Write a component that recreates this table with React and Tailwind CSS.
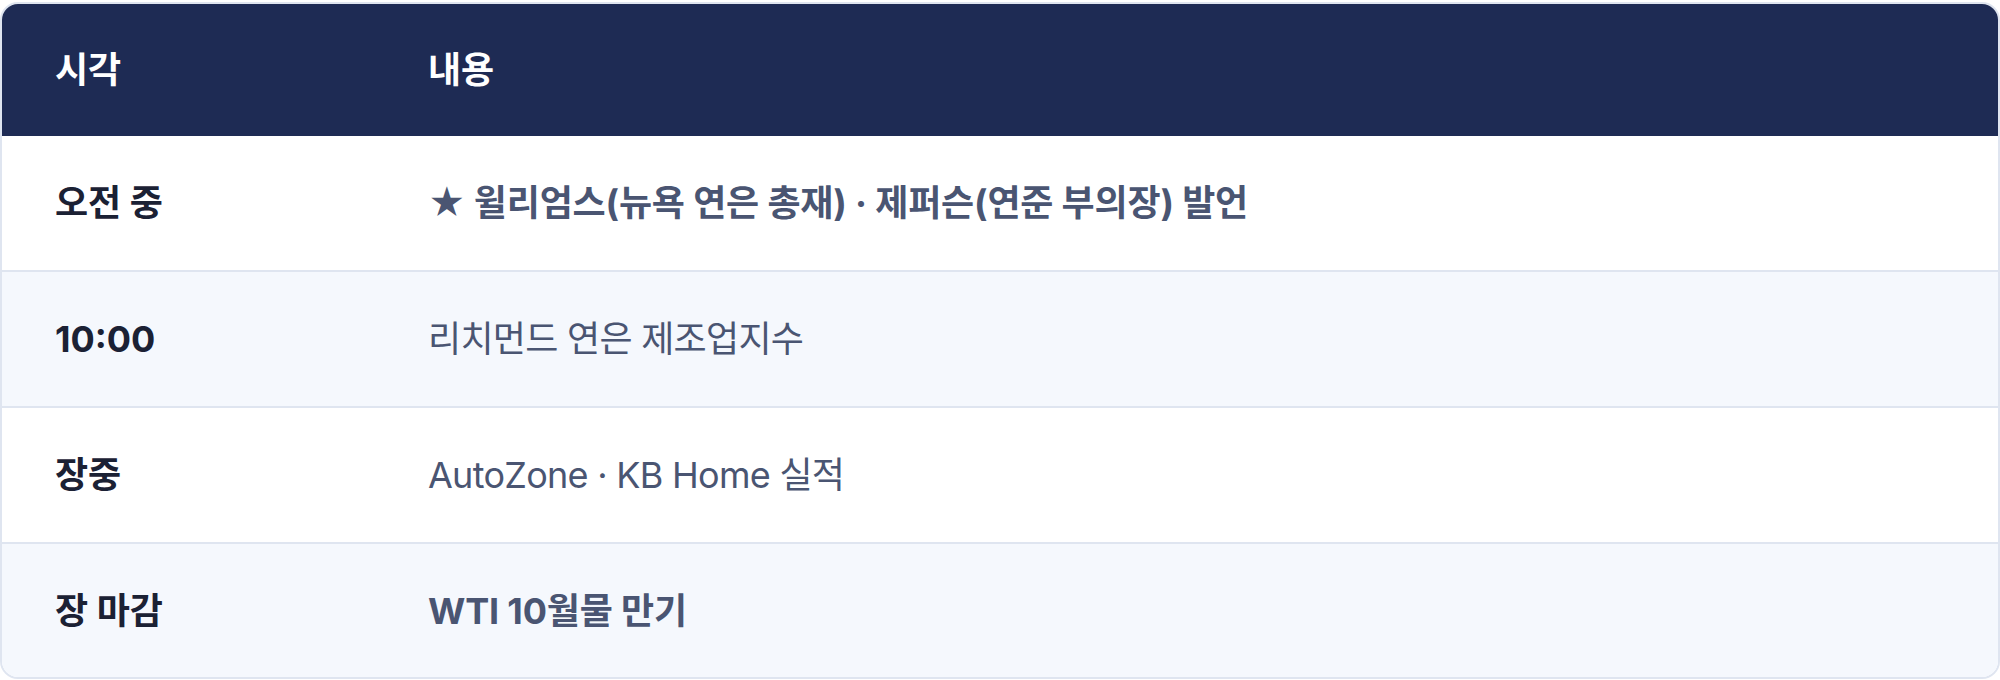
const rows = [
  {
    time: "오전 중",
    content: "★ 윌리엄스(뉴욕 연은 총재) · 제퍼슨(연준 부의장) 발언",
    strong: true,
  },
  { time: "10:00", content: "리치먼드 연은 제조업지수", strong: false },
  { time: "장중", content: "AutoZone · KB Home 실적", strong: false },
  { time: "장 마감", content: "WTI 10월물 만기", strong: true },
];

export default function App() {
  return (
    <div
      className="pt-[2px] bg-white"
      style={{ fontFamily: '"Inter", "Noto Sans CJK KR", sans-serif' }}
    >
      <div className="overflow-hidden rounded-[18px] border-2 border-[#dfe5f0]">
        {/* Header */}
        <div className="flex h-[132px] items-center bg-[#1e2b54] text-[36px] font-bold text-white">
          <div className="w-[374px] shrink-0 pl-[53px]">시각</div>
          <div className="pl-[52px]">내용</div>
        </div>

        {/* Rows */}
        {rows.map((row, i) => (
          <div
            key={row.time}
            className={
              "flex items-center text-[36px] " +
              (i % 2 === 1 ? "bg-[#f5f8fd] " : "bg-white ") +
              (i < rows.length - 1
                ? "h-[136px] border-b-2 border-[#dfe5f0]"
                : "h-[133px]")
            }
          >
            <div className="w-[374px] shrink-0 pl-[53px] font-bold text-[#1b2134]">
              {row.time}
            </div>
            <div
              className={
                "pl-[52px] text-[#4a5572] " +
                (row.strong
                  ? "font-bold tracking-[-0.005em]"
                  : "font-normal tracking-[-0.02em]")
              }
            >
              {row.content}
            </div>
          </div>
        ))}
      </div>
    </div>
  );
}
